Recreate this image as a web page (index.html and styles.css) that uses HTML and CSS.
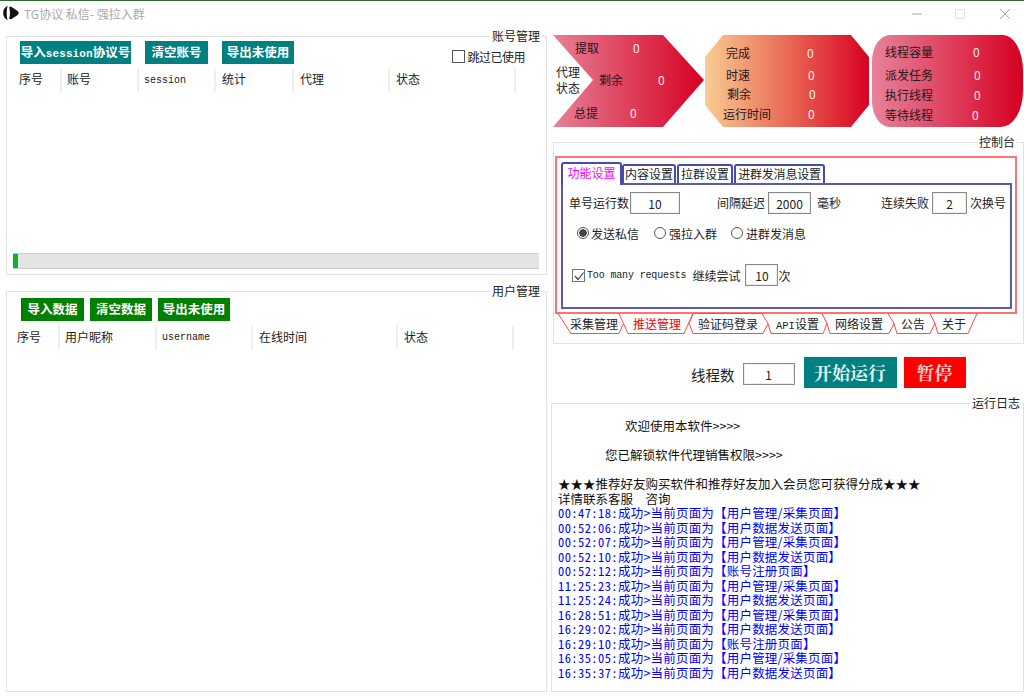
FILE: index.html
```html
<!DOCTYPE html>
<html lang="zh-CN">
<head>
<meta charset="utf-8">
<title>TG协议 私信- 强拉入群</title>
<link rel="stylesheet" href="styles.css">
</head>
<body>
<div class="app">
  <header class="titlebar">
    <svg class="logo" width="16" height="16" viewBox="0 0 16 16">
      <path d="M4.6 .8 C1.4 2.4 .2 5 .2 8 C.2 11 1.4 13.6 4.6 15.2 C3.4 11 3.4 5 4.6 .8 Z" fill="#111"/>
      <path d="M6.2 2.2 C6.8 1.6 7.8 1.6 8.6 2 L14.6 6 C16 7 16 9 14.6 10 L8.6 14 C7.8 14.4 6.8 14.4 6.2 13.8 C7.2 10 7.2 6 6.2 2.2 Z" fill="#111"/>
    </svg>
    <span class="title">TG协议 私信- 强拉入群</span>
    <div class="winbtns">
      <svg width="98" height="12" viewBox="0 0 98 12">
        <path d="M0 6 H10" stroke="#aaa" fill="none"/>
        <rect x="43.5" y="1.5" width="9" height="9" stroke="#e4e4e4" fill="none"/>
        <path d="M88 1 L98 11 M98 1 L88 11" stroke="#aaa" fill="none"/>
      </svg>
    </div>
  </header>
  <main class="main">
    <section class="left">
      <div class="group group-acc">
        <span class="legend">账号管理</span>
        <div class="toolbar toolbar-acc">
          <button class="btn teal w-session">导入<span class="latin">session</span>协议号</button>
          <button class="btn teal w-clear">清空账号</button>
          <button class="btn teal w-export">导出未使用</button>
          <label class="skip"><span class="check"></span>跳过已使用</label>
        </div>
        <div class="thead thead-acc">
          <span>序号</span><span>账号</span><span class="latin">session</span><span class="pad7">统计</span><span class="pad7">代理</span><span class="pad7">状态</span>
        </div>
        <div class="progress"><div class="bar"></div></div>
      </div>
      <div class="group group-user">
        <span class="legend">用户管理</span>
        <div class="toolbar toolbar-user">
          <button class="btn green w-clear">导入数据</button>
          <button class="btn green w-data">清空数据</button>
          <button class="btn green w-export">导出未使用</button>
        </div>
        <div class="thead thead-user">
          <span>序号</span><span>用户昵称</span><span class="latin">username</span><span class="pad7">在线时间</span><span class="pad7">状态</span>
        </div>
      </div>
    </section>
    <section class="right">
      <div class="stats">
        <div class="shape shape-a">
          <span class="proxy">代理<br>状态</span>
          <div class="row"><b>提取</b><i>0</i></div>
          <div class="row"><b>剩余</b><i>0</i></div>
          <div class="row"><b>总提</b><i>0</i></div>
        </div>
        <div class="shape shape-b">
          <div class="row"><b>完成</b><i>0</i></div>
          <div class="row"><b>时速</b><i>0</i></div>
          <div class="row"><b>剩余</b><i>0</i></div>
          <div class="row"><b>运行时间</b><i>0</i></div>
        </div>
        <div class="shape shape-c">
          <div class="row"><b>线程容量</b><i>0</i></div>
          <div class="row"><b>派发任务</b><i>0</i></div>
          <div class="row"><b>执行线程</b><i>0</i></div>
          <div class="row"><b>等待线程</b><i>0</i></div>
        </div>
      </div>
      <div class="group ctrl">
        <span class="legend">控制台</span>
        <div class="redbox">
          <div class="tabs">
            <span class="tab active t1">功能设置</span>
            <span class="tab t2">内容设置</span>
            <span class="tab t3">拉群设置</span>
            <span class="tab t4">进群发消息设置</span>
          </div>
          <div class="panel">
            <div class="fields">
              <span class="lb">单号运行数</span><input class="num n1" value="10">
              <span class="lb m37">间隔延迟</span><input class="num n2" value="2000">
              <span class="lb m6">毫秒</span>
              <span class="lb m40">连续失败</span><input class="num n3" value="2">
              <span class="lb m3">次换号</span>
            </div>
            <div class="radios">
              <span class="radio on"></span><span class="rl2">发送私信</span>
              <span class="radio m15"></span><span class="rl3">强拉入群</span>
              <span class="radio m14"></span><span class="rl3">进群发消息</span>
            </div>
            <div class="retry">
              <span class="check checked"><svg width="12" height="12" viewBox="0 0 12 12"><path d="M2 6 L5 9.5 L10.5 2.5" fill="none" stroke="#444" stroke-width="1.2"/></svg></span>
              <span class="latin many">Too many requests</span>
              <span class="m6">继续尝试</span><input class="num n4" value="10">
              <span>次</span>
            </div>
          </div>
        </div>
        <svg class="subtabs" width="470" height="22" viewBox="554 313 470 22">
          <path fill="none" stroke="#ff4a4a" d="M557 313.5 L570 333.5 H618 L622.5 323.5 L618 313.5 M622.5 323.5 L627 333.5 H683 L692 313.5 H761 L767 323.5 L762 333.5 H692 L688 323.5 L692 313.5 M767 323.5 L770 333.5 H822 L826 323.5 L821 313.5 M826 323.5 L829 333.5 H888 L893 323.5 L887 313.5 M893 323.5 L896 333.5 H929 L934 323.5 L929 313.5 M934 323.5 L937 333.5 H967 L976 313.5"/>
          <text x="569" y="329">采集管理</text>
          <text x="632" y="329" class="red">推送管理</text>
          <text x="697" y="329">验证码登录</text>
          <text x="775" y="329"><tspan class="mono">API</tspan>设置</text>
          <text x="834" y="329">网络设置</text>
          <text x="900" y="329">公告</text>
          <text x="941" y="329">关于</text>
        </svg>
      </div>
      <div class="runrow">
        <span class="threads">线程数</span>
        <input class="num n5" value="1">
        <button class="bigbtn start">开始运行</button>
        <button class="bigbtn pause">暂停</button>
      </div>
      <div class="group log">
        <span class="legend">运行日志</span>
        <div class="line l1">欢迎使用本软件&gt;&gt;&gt;&gt;</div>
        <div class="line"></div>
        <div class="line l2">您已解锁软件代理销售权限&gt;&gt;&gt;&gt;</div>
        <div class="line"></div>
        <div class="line">★★★推荐好友购买软件和推荐好友加入会员您可获得分成★★★</div>
        <div class="line">详情联系客服　咨询</div>
        <div class="line blue"><span class="time">00:47:18:</span>成功&gt;当前页面为【用户管理/采集页面】</div>
        <div class="line blue"><span class="time">00:52:06:</span>成功&gt;当前页面为【用户数据发送页面】</div>
        <div class="line blue"><span class="time">00:52:07:</span>成功&gt;当前页面为【用户管理/采集页面】</div>
        <div class="line blue"><span class="time">00:52:10:</span>成功&gt;当前页面为【用户数据发送页面】</div>
        <div class="line blue"><span class="time">00:52:12:</span>成功&gt;当前页面为【账号注册页面】</div>
        <div class="line blue"><span class="time">11:25:23:</span>成功&gt;当前页面为【用户管理/采集页面】</div>
        <div class="line blue"><span class="time">11:25:24:</span>成功&gt;当前页面为【用户数据发送页面】</div>
        <div class="line blue"><span class="time">16:28:51:</span>成功&gt;当前页面为【用户管理/采集页面】</div>
        <div class="line blue"><span class="time">16:29:02:</span>成功&gt;当前页面为【用户数据发送页面】</div>
        <div class="line blue"><span class="time">16:29:10:</span>成功&gt;当前页面为【账号注册页面】</div>
        <div class="line blue"><span class="time">16:35:05:</span>成功&gt;当前页面为【用户管理/采集页面】</div>
        <div class="line blue"><span class="time">16:35:37:</span>成功&gt;当前页面为【用户数据发送页面】</div>
      </div>
    </section>
  </main>
</div>
</body>
</html>
```
FILE: styles.css
```css
* { box-sizing: border-box; }
html, body { margin: 0; padding: 0; background: #fff; }
body {
  width: 1024px; height: 697px; overflow: hidden;
  font: 12px/17px "Noto Sans CJK SC", "Liberation Sans", sans-serif;
  color: #222;
}
.titlebar {
  height: 36px; border-top: 1px solid #2f6f2f;
  display: flex; align-items: flex-start; padding: 4px 0 0 3px;
}
.logo { flex: none; }
.title { margin-left: 5px; color: #aaa; font-size: 12px; line-height: 15px; margin-top: 1px; }
.winbtns { margin-left: auto; margin-right: 14px; margin-top: 3px; line-height: 0; }
.main {
  display: grid; grid-template-columns: 541px 473px; column-gap: 4px;
  padding-left: 6px;
}
.left, .right { display: flex; flex-direction: column; }
.group { position: relative; border: 1px solid #e2e2e2; background: #fff; }
.legend {
  position: absolute; top: -10px; right: 5px; padding: 0 1px 0 2px;
  background: #fff; line-height: 17px; color: #222;
}
.group-acc { height: 239px; padding: 4px 0 0 6px; display: flex; flex-direction: column; }
.group-user { height: 401px; margin-top: 16px; padding: 6px 0 0 4px; }
.toolbar { display: flex; }
.toolbar-acc { margin-left: 7px; gap: 14px; }
.toolbar-user { margin-left: 10px; gap: 6px; }
.btn {
  height: 23px; border: 0; padding: 0 0 2px; color: #fff; white-space: nowrap;
  font: bold 12.5px/21px "Noto Sans CJK SC", sans-serif;
}
.btn .latin { font-size: 11px; letter-spacing: .1px; }
.teal { background: #008080; }
.green { background: #008000; }
.w-session { width: 111px; }
.w-clear { width: 63px; }
.w-data { width: 62px; }
.w-export { width: 72px; }
.latin { font-family: "Liberation Mono", monospace; font-size: 10px; }
.skip { margin-left: auto; margin-right: 21px; margin-top: 7px; display: flex; align-items: center; height: 17px; align-self: flex-start; letter-spacing: -.5px; }
.check { width: 13px; height: 13px; border: 1px solid #555; margin-right: 2px; display: inline-block; background: #fff; flex: none; }
.thead { display: grid; height: 23px; margin: 4px 0 0 1px; line-height: 23px; }
.thead span { padding-left: 5px; border-right: 2px solid #efefef; white-space: nowrap; }
.thead .pad7 { padding-left: 6px; }
.thead-acc { grid-template-columns: 48px 77px 77px 78px 96px 126px; line-height: 20px; }
.thead-acc .latin { line-height: 23px; }
.thead-user { grid-template-columns: 48px 97px 96px 145px 116px; }
.thead-user .latin { line-height: 25px; }
.progress {
  margin-top: auto; margin-bottom: 5px; height: 16px; width: 526px;
  background: #e4e4e4; border: 1px solid #cfcfcf; border-width: 1px 0;
}
.bar { width: 5px; height: 100%; background: #10b030; }

.stats { display: flex; height: 92px; margin: -1px 0 0 2px; }
.shape { position: relative; height: 92px; z-index: 0; flex: none; }
.shape::before { content: ""; position: absolute; inset: 0; z-index: -1; }
.shape-a { width: 151px; }
.shape-a::before {
  background: linear-gradient(90deg, #e88096, #d60022);
  clip-path: polygon(0 0, 110px 0, 151px 45px, 110px 92px, 0 92px, 40px 45px);
}
.shape-b { width: 164px; margin-left: 1px; }
.shape-b::before {
  background: linear-gradient(90deg, #f8cc92, #e8604f 55%, #d80024);
  clip-path: polygon(0 22px, 18px 0, 146px 0, 164px 22px, 164px 70px, 146px 92px, 18px 92px, 0 70px);
}
.shape-c { width: 151px; margin-left: 3px; }
.shape-c::before {
  background: linear-gradient(90deg, #e8829a, #d60022);
  border-radius: 18px 20px 22px 18px / 26px 36px 36px 26px;
}
.proxy { position: absolute; left: 3px; top: 29px; line-height: 16px; color: #222; }
.row { display: flex; height: 19px; line-height: 17px; color: #2a1418; white-space: nowrap; }
.row b { font-weight: 400; }
.row i { font-style: normal; color: #fff; opacity: .9; }
.shape-a .row:nth-of-type(1) { margin-top: 4px; padding-left: 22px; gap: 34px; }
.shape-a .row:nth-of-type(2) { margin-top: 13px; padding-left: 46px; gap: 35px; }
.shape-a .row:nth-of-type(3) { margin-top: 14px; padding-left: 21px; gap: 32px; }
.shape-b .row:nth-child(1) { margin-top: 9px; padding-left: 21px; gap: 57px; }
.shape-b .row:nth-child(2) { margin-top: 3px; padding-left: 21px; gap: 58px; }
.shape-b .row:nth-child(3) { padding-left: 22px; gap: 58px; }
.shape-b .row:nth-child(4) { margin-top: 1px; padding-left: 18px; gap: 37px; }
.shape-c .row:nth-child(1) { margin-top: 8px; padding-left: 13px; gap: 40px; }
.shape-c .row:nth-child(2) { margin-top: 4px; padding-left: 13px; gap: 41px; }
.shape-c .row:nth-child(3) { margin-top: 1px; padding-left: 13px; gap: 41px; }
.shape-c .row:nth-child(4) { margin-top: 1px; padding-left: 13px; gap: 39px; }

.ctrl { height: 202px; margin: 15px 0 0 2px; padding: 13px 6px 0 1px; }
.ctrl .legend { right: 7px; }
.redbox { height: 158px; border: 2px solid #ff7272; padding: 4px 3px 0 4px; }
.tabs { display: flex; align-items: flex-end; height: 21px; gap: 1px; position: relative; z-index: 1; }
.tab {
  height: 19px; border: 2px solid #4a4aa8; border-bottom: 0; border-radius: 3px 3px 0 0;
  text-align: center; line-height: 15px; background: #fff; white-space: nowrap; color: #222;
}
.tab.active { height: 23px; margin-bottom: -2px; color: #f0f; line-height: 17px; }
.t1 { width: 61px; margin-right: -1px; }
.t2 { width: 54px; }
.t3 { width: 56px; }
.t4 { width: 91px; letter-spacing: -.2px; }
.panel { height: 126px; border: 2px solid #5a5ab0; padding: 7px 0 0 6px; }
.fields, .radios, .retry { display: flex; align-items: center; white-space: nowrap; }
.fields { height: 22px; }
.lb { padding-bottom: 2px; }
.num {
  height: 22px; border: 1px solid #8a8a8a; padding: 0; text-align: center; background: #fff;
  font: 12px "Noto Sans CJK SC", sans-serif; color: #222; outline: 0;
  box-shadow: inset 0 0 0 1px #eee;
}
.n1 { width: 50px; margin-left: 1px; }
.n2 { width: 43px; margin-left: 3px; }
.n3 { width: 35px; margin-left: 3px; }
.n4 { width: 33px; margin-left: 5px; }
.n5 { width: 52px; margin: 3px 0 0 8px; }
.m3 { margin-left: 3px; }
.m6 { margin-left: 6px; }
.m37 { margin-left: 37px; }
.m40 { margin-left: 40px; }
.radios { height: 18px; margin-top: 10px; padding-left: 8px; }
.radio { width: 12px; height: 12px; border: 1px solid #555; border-radius: 50%; flex: none; background: #fff; }
.radio.on { background: radial-gradient(circle, #444 0 3.5px, #fff 4px); }
.radio.m15 { margin-left: 15px; }
.radio.m14 { margin-left: 14px; }
.rl2 { margin-left: 2px; }
.rl3 { margin-left: 3px; }
.retry { height: 22px; margin-top: 22px; padding-left: 3px; }
.check.checked { width: 13px; height: 13px; margin-right: 0; line-height: 0; border-color: #777; }
.many { margin-left: 2px; letter-spacing: -.15px; }
.subtabs { display: block; margin-top: -1px; }
.subtabs text { font: 12px "Noto Sans CJK SC", sans-serif; fill: #222; }
.subtabs .mono { font: 10.5px "Liberation Mono", monospace; }
.subtabs .red { fill: #f00; }

.runrow { display: flex; align-items: center; height: 31px; margin-top: 13px; padding-left: 140px; }
.threads { font-size: 14.5px; white-space: nowrap; margin-top: 4px; }
.bigbtn {
  height: 31px; border: 0; padding: 0; font: bold 18px/31px "Noto Serif CJK SC", "Noto Sans CJK SC", sans-serif;
  color: #e8f2f2; white-space: nowrap;
}
.start { width: 93px; margin-left: 9px; background: #008080; }
.pause { width: 62px; margin-left: 7px; background: #f00; color: #f0d0d0; }

.log { height: 289px; margin-top: 15px; padding: 15px 0 0 6px; }
.log .legend { right: 2px; }
.line { height: 14.5px; line-height: 14.5px; font-size: 12.5px; white-space: nowrap; color: #111; }
.l1 { padding-left: 67px; }
.l2 { padding-left: 47px; }
.blue { color: #00f; letter-spacing: .2px; }
.time { font-family: "Noto Sans Mono CJK SC", "DejaVu Sans Mono", monospace; font-size: 12.5px; letter-spacing: .42px; }
```
